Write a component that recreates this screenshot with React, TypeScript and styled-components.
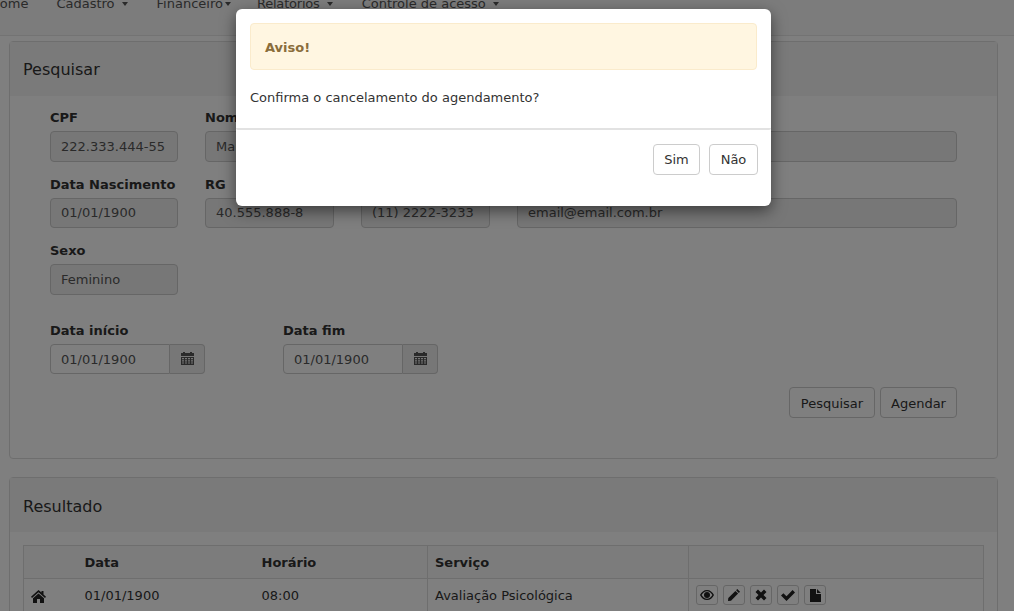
import styled, { createGlobalStyle } from 'styled-components';

// =============================================
// STYLED COMPONENTS
// =============================================

const GlobalStyle = createGlobalStyle`
  html, body {
    margin: 0;
    padding: 0;
    background: #fff;
  }
  body {
    font-family: "DejaVu Sans", Verdana, sans-serif;
    font-size: 13px;
    line-height: 20px;
    color: #333;
  }
  * {
    box-sizing: border-box;
  }
`;

const Page = styled.div`
  position: relative;
  width: 1014px;
  height: 611px;
  overflow: hidden;
`;

const Navbar = styled.nav`
  height: 36px;
  background: #f8f8f8;
  border-bottom: 1px solid #e7e7e7;
  margin-bottom: 5px;
  overflow: hidden;
`;

const NavList = styled.div`
  display: flex;
  gap: 29px;
  margin: -6px 0 0 -10px;
`;

const NavItem = styled.span<{ $pull?: number; $squeeze?: boolean }>`
  display: flex;
  align-items: center;
  color: #555;
  white-space: nowrap;
  margin-right: ${({ $pull }) => $pull ?? 0}px;
  letter-spacing: ${({ $squeeze }) => ($squeeze ? '-0.2px' : '0')};
`;

const Caret = styled.span<{ $tight?: boolean }>`
  width: 0;
  height: 0;
  margin-left: ${({ $tight }) => ($tight ? '2px' : '7px')};
  border-top: 4px solid #555;
  border-left: 3px solid transparent;
  border-right: 3px solid transparent;
`;

const Panel = styled.section`
  width: 989px;
  margin: 0 0 18px 9px;
  background: #fff;
  border: 1px solid #ddd;
  border-radius: 4px;
`;

const PanelHeading = styled.h3<{ $nudge?: number }>`
  height: 54px;
  margin: 0;
  padding: ${({ $nudge }) => 2 + ($nudge ?? 0)}px 13px 0;
  display: flex;
  align-items: center;
  background: #f5f5f5;
  font-size: 16px;
  font-weight: 400;
  color: #333;
`;

const SearchBody = styled.div`
  padding: 12.4px 40px 40px;
`;

const FieldGrid = styled.div`
  display: grid;
  grid-template-columns: 128px 129px 129px 1fr;
  column-gap: 27px;
  row-gap: 13px;
`;

const Field = styled.div<{ $span?: number }>`
  grid-column: span ${({ $span }) => $span ?? 1};
  min-width: 0;
`;

const Label = styled.label`
  display: block;
  margin-bottom: 3px;
  font-weight: 700;
  color: #333;
  white-space: nowrap;
`;

const ReadOnlyInput = styled.div`
  height: 30.5px;
  padding: 0 10px;
  display: flex;
  align-items: center;
  background: #eee;
  border: 1px solid #ccc;
  border-radius: 4px;
  color: #555;
  white-space: nowrap;
  overflow: hidden;
`;

const DateRow = styled.div`
  display: flex;
  gap: 78px;
  margin-top: 26px;
`;

const DateField = styled.div`
  width: 155px;
`;

const InputGroup = styled.div`
  display: flex;
  height: 30px;
`;

const DateInput = styled.div`
  width: 120px;
  padding: 2px 10px 0;
  display: flex;
  align-items: center;
  background: #fff;
  border: 1px solid #ccc;
  border-radius: 4px 0 0 4px;
  color: #555;
`;

const Addon = styled.span`
  width: 35px;
  display: flex;
  align-items: center;
  justify-content: center;
  background: #eee;
  border: 1px solid #ccc;
  border-left: 0;
  border-radius: 0 4px 4px 0;
  color: #555;
`;

const FormActions = styled.div`
  display: flex;
  justify-content: flex-end;
  gap: 5px;
  margin-top: 13px;
`;

const Button = styled.button<{ $width: number; $drop?: number }>`
  width: ${({ $width }) => $width}px;
  height: 31px;
  padding: ${({ $drop }) => $drop ?? 1}px 0 0;
  background: #fff;
  border: 1px solid #ccc;
  border-radius: 4px;
  font: inherit;
  color: #333;
`;

const ResultBody = styled.div`
  padding: 13px 13px;
`;

const Table = styled.table`
  width: 960px;
  table-layout: fixed;
  border-collapse: collapse;
  border: 1px solid #ddd;
`;

const HeadCell = styled.th<{ $divider?: boolean }>`
  height: 33px;
  padding: 2px 8px 0 7px;
  text-align: left;
  font-weight: 700;
  color: #333;
  background: #f9f9f9;
  border-bottom: 1px solid #ddd;
  border-left: ${({ $divider }) => ($divider ? '1px solid #ddd' : '0')};
`;

const Cell = styled.td<{ $divider?: boolean }>`
  height: 34px;
  padding: 2px 8px 0 7px;
  color: #333;
  border-bottom: 1px solid #ddd;
  border-left: ${({ $divider }) => ($divider ? '1px solid #ddd' : '0')};
`;

const HomeMark = styled.span`
  display: flex;
  color: #222;
`;

const ActionRow = styled.div`
  display: flex;
  gap: 5px;
  margin-top: -2px;
`;

const ActionButton = styled.button`
  width: 22px;
  height: 20px;
  padding: 0;
  display: flex;
  align-items: center;
  justify-content: center;
  background: #fff;
  border: 1px solid #ccc;
  border-radius: 3px;
  color: #222;
`;

const Backdrop = styled.div`
  position: absolute;
  inset: 0;
  background: rgba(0, 0, 0, 0.5);
`;

const Modal = styled.div`
  position: absolute;
  left: 236px;
  top: 9px;
  width: 535px;
  height: 197px;
  background: #fff;
  border-radius: 6px;
  box-shadow: 0 5px 15px rgba(0, 0, 0, 0.5);
`;

const ModalBody = styled.div`
  height: 121px;
  padding: 14px;
  border-bottom: 2px solid #e2e2e2;
  border-radius: 0 0 2px 2px;
`;

const Alert = styled.div`
  height: 47px;
  padding: 3px 14px 0;
  display: flex;
  align-items: center;
  background: #fff6e1;
  border: 1px solid #faebcc;
  border-radius: 4px;
  font-weight: 700;
  color: #8a6d3b;
`;

const Question = styled.p`
  margin: 18px 0 0;
  color: #333;
`;

const ModalFooter = styled.div`
  display: flex;
  justify-content: flex-end;
  gap: 9px;
  padding: 14px 13px 0;
`;

// =============================================
// ICONS
// =============================================

const CalendarIcon = () => (
  <svg width="13" height="13" viewBox="0 0 13 13" fill="currentColor">
    <rect x="2" y="0" width="2" height="2" />
    <rect x="9" y="0" width="2" height="2" />
    <rect x="0" y="1" width="13" height="3" />
    <path fillRule="evenodd" d="M0 5h13v8H0zM1 6v1.2h2V6zm3 0v1.2h2V6zm3 0v1.2h2V6zm3 0v1.2h2V6zM1 8.2v1.2h2V8.2zm3 0v1.2h2V8.2zm3 0v1.2h2V8.2zm3 0v1.2h2V8.2zM1 10.4v1.2h2v-1.2zm3 0v1.2h2v-1.2zm3 0v1.2h2v-1.2zm3 0v1.2h2v-1.2z" />
  </svg>
);

const HomeIcon = () => (
  <svg width="15" height="13" viewBox="0 0 15 13" fill="currentColor">
    <path d="M7.5 0 10.500 2.600V1h2v3.400L15 6.800 14 8 7.500 2.300 1 8 0 6.800z" />
    <path d="M7.5 3.400 13 8.200V13H9V9H6v4H2V8.200z" />
  </svg>
);

const EyeIcon = () => (
  <svg width="14" height="10" viewBox="0 0 14 10" fill="currentColor">
    <path fillRule="evenodd" d="M7 0c3 0 5.6 2 7 5-1.4 3-4 5-7 5S1.4 8 0 5c1.400-3 4-5 7-5zM7 1.200C4.800 1.200 2.900 2.700 1.600 5 2.900 7.300 4.800 8.800 7 8.800S11.100 7.300 12.400 5C11.100 2.700 9.200 1.200 7 1.200z" />
    <circle cx="7" cy="5" r="3" />
  </svg>
);

const PencilIcon = () => (
  <svg width="12" height="12" viewBox="0 0 12 12" fill="currentColor">
    <path d="M9.300 0 12 2.700 10.800 3.900 8.100 1.200z" />
    <path d="M7.400 1.900 10.100 4.600 3 11.700 0 12 .3 9z" />
  </svg>
);

const RemoveIcon = () => (
  <svg width="12" height="12" viewBox="0 0 12 12" fill="currentColor">
    <path d="M3 .5 6 3.500 9 .5 11.500 3 8.500 6 11.500 9 9 11.500 6 8.500 3 11.500 .5 9 3.500 6 .5 3z" />
  </svg>
);

const OkIcon = () => (
  <svg width="14" height="11" viewBox="0 0 14 11" fill="currentColor">
    <path d="M11.600 0 14 2.400 5.500 11 0 5.600 2.400 3.200 5.500 6.200z" />
  </svg>
);

const FileIcon = () => (
  <svg width="11" height="13" viewBox="0 0 11 13" fill="currentColor">
    <path d="M0 0h6v5h5v8H0z" />
    <path d="M7 0l4 4H7z" />
  </svg>
);

// =============================================
// COMPONENT
// =============================================

export default function App() {
  return (
    <Page>
      <GlobalStyle />

      <Navbar>
        <NavList>
          <NavItem $pull={-1}>Home</NavItem>
          <NavItem>
            Cadastro <Caret />
          </NavItem>
          <NavItem $pull={-3}>
            Financeiro<Caret $tight />
          </NavItem>
          <NavItem $squeeze>
            Relatorios <Caret />
          </NavItem>
          <NavItem>
            Controle de acesso <Caret />
          </NavItem>
        </NavList>
      </Navbar>

      <Panel>
        <PanelHeading>Pesquisar</PanelHeading>
        <SearchBody>
          <FieldGrid>
            <Field>
              <Label>CPF</Label>
              <ReadOnlyInput>222.333.444-55</ReadOnlyInput>
            </Field>
            <Field $span={3}>
              <Label>Nome</Label>
              <ReadOnlyInput>Maria da Silva</ReadOnlyInput>
            </Field>
            <Field>
              <Label>Data Nascimento</Label>
              <ReadOnlyInput>01/01/1900</ReadOnlyInput>
            </Field>
            <Field>
              <Label>RG</Label>
              <ReadOnlyInput>40.555.888-8</ReadOnlyInput>
            </Field>
            <Field>
              <Label>Telefone</Label>
              <ReadOnlyInput>(11) 2222-3233</ReadOnlyInput>
            </Field>
            <Field>
              <Label>E-mail</Label>
              <ReadOnlyInput>email@email.com.br</ReadOnlyInput>
            </Field>
            <Field>
              <Label>Sexo</Label>
              <ReadOnlyInput>Feminino</ReadOnlyInput>
            </Field>
          </FieldGrid>

          <DateRow>
            <DateField>
              <Label>Data início</Label>
              <InputGroup>
                <DateInput>01/01/1900</DateInput>
                <Addon>
                  <CalendarIcon />
                </Addon>
              </InputGroup>
            </DateField>
            <DateField>
              <Label>Data fim</Label>
              <InputGroup>
                <DateInput>01/01/1900</DateInput>
                <Addon>
                  <CalendarIcon />
                </Addon>
              </InputGroup>
            </DateField>
          </DateRow>

          <FormActions>
            <Button $width={86} $drop={3}>
              Pesquisar
            </Button>
            <Button $width={77} $drop={3}>
              Agendar
            </Button>
          </FormActions>
        </SearchBody>
      </Panel>

      <Panel>
        <PanelHeading $nudge={2}>Resultado</PanelHeading>
        <ResultBody>
          <Table>
            <colgroup>
              <col width="54" />
              <col width="177" />
              <col width="173" />
              <col width="261" />
              <col width="295" />
            </colgroup>
            <thead>
              <tr>
                <HeadCell />
                <HeadCell>Data</HeadCell>
                <HeadCell>Horário</HeadCell>
                <HeadCell $divider>Serviço</HeadCell>
                <HeadCell $divider />
              </tr>
            </thead>
            <tbody>
              <tr>
                <Cell>
                  <HomeMark>
                    <HomeIcon />
                  </HomeMark>
                </Cell>
                <Cell>01/01/1900</Cell>
                <Cell>08:00</Cell>
                <Cell $divider>Avaliação Psicológica</Cell>
                <Cell $divider>
                  <ActionRow>
                    <ActionButton>
                      <EyeIcon />
                    </ActionButton>
                    <ActionButton>
                      <PencilIcon />
                    </ActionButton>
                    <ActionButton>
                      <RemoveIcon />
                    </ActionButton>
                    <ActionButton>
                      <OkIcon />
                    </ActionButton>
                    <ActionButton>
                      <FileIcon />
                    </ActionButton>
                  </ActionRow>
                </Cell>
              </tr>
            </tbody>
          </Table>
        </ResultBody>
      </Panel>

      <Backdrop />

      <Modal>
        <ModalBody>
          <Alert>Aviso!</Alert>
          <Question>Confirma o cancelamento do agendamento?</Question>
        </ModalBody>
        <ModalFooter>
          <Button $width={47}>Sim</Button>
          <Button $width={49}>Não</Button>
        </ModalFooter>
      </Modal>
    </Page>
  );
}
